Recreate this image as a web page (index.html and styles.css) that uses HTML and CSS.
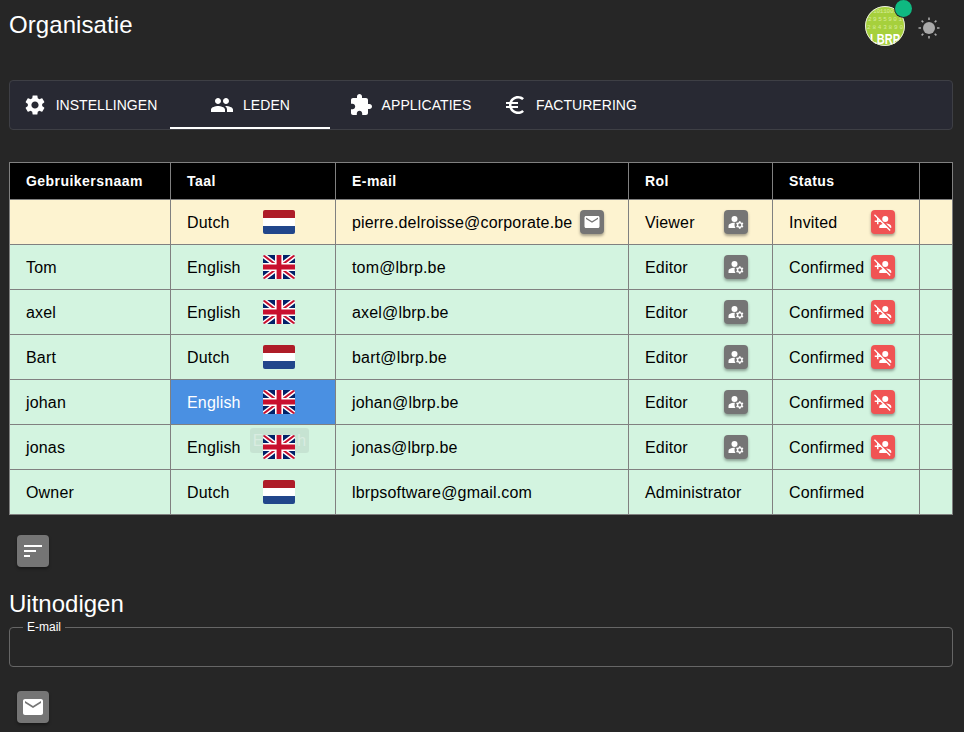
FILE: index.html
```html
<!DOCTYPE html>
<html lang="nl">
<head>
<meta charset="utf-8">
<title>Organisatie</title>
<link rel="stylesheet" href="styles.css">
</head>
<body>
<svg class="defs" width="0" height="0" aria-hidden="true">
  <defs><clipPath id="avatar-clip"><circle cx="20" cy="20" r="20"/></clipPath></defs>
  <symbol id="i-settings" viewBox="0 0 24 24"><path d="M19.14 12.94c.04-.3.06-.61.06-.94 0-.32-.02-.64-.07-.94l2.03-1.58c.18-.14.23-.41.12-.61l-1.92-3.32c-.12-.22-.37-.29-.59-.22l-2.39.96c-.5-.38-1.03-.7-1.62-.94l-.36-2.54c-.04-.24-.24-.41-.48-.41h-3.84c-.24 0-.43.17-.47.41l-.36 2.54c-.59.24-1.13.57-1.62.94l-2.39-.96c-.22-.08-.47 0-.59.22L2.74 8.87c-.12.21-.08.47.12.61l2.03 1.58c-.05.3-.09.63-.09.94s.02.64.07.94l-2.03 1.58c-.18.14-.23.41-.12.61l1.92 3.32c.12.22.37.29.59.22l2.39-.96c.5.38 1.03.7 1.62.94l.36 2.54c.05.24.24.41.48.41h3.84c.24 0 .44-.17.47-.41l.36-2.54c.59-.24 1.13-.56 1.62-.94l2.39.96c.22.08.47 0 .59-.22l1.92-3.32c.12-.22.07-.47-.12-.61l-2.01-1.58zM12 15.6c-1.98 0-3.6-1.62-3.6-3.6s1.62-3.6 3.6-3.6 3.6 1.62 3.6 3.6-1.62 3.6-3.6 3.6z"/></symbol>
  <symbol id="i-people" viewBox="0 0 24 24"><path d="M16 11c1.66 0 2.99-1.34 2.99-3S17.66 5 16 5c-1.66 0-3 1.34-3 3s1.34 3 3 3zm-8 0c1.66 0 2.99-1.34 2.99-3S9.66 5 8 5C6.34 5 5 6.34 5 8s1.34 3 3 3zm0 2c-2.33 0-7 1.17-7 3.5V19h14v-2.5c0-2.33-4.67-3.5-7-3.5zm8 0c-.29 0-.62.02-.97.05 1.16.84 1.97 1.97 1.97 3.45V19h6v-2.5c0-2.33-4.67-3.5-7-3.5z"/></symbol>
  <symbol id="i-extension" viewBox="0 0 24 24"><path d="M20.5 11H19V7c0-1.1-.9-2-2-2h-4V3.5C13 2.12 11.88 1 10.5 1S8 2.12 8 3.5V5H4c-1.1 0-1.99.9-1.99 2v3.8H3.5c1.49 0 2.7 1.21 2.7 2.7s-1.21 2.7-2.7 2.7H2V20c0 1.1.9 2 2 2h3.8v-1.5c0-1.49 1.21-2.7 2.7-2.7 1.49 0 2.7 1.21 2.7 2.7V22H17c1.1 0 2-.9 2-2v-4h1.5c1.38 0 2.5-1.12 2.5-2.5S21.88 11 20.5 11z"/></symbol>
  <symbol id="i-euro" viewBox="0 0 24 24"><path d="M15 18.5c-2.51 0-4.68-1.42-5.76-3.5H15v-2H8.58c-.05-.33-.08-.66-.08-1s.03-.67.08-1H15V9H9.24C10.32 6.92 12.5 5.5 15 5.5c1.61 0 3.09.59 4.23 1.57L21 5.3C19.41 3.87 17.3 3 15 3c-3.92 0-7.24 2.51-8.48 6H3v2h3.06c-.04.33-.06.66-.06 1s.02.67.06 1H3v2h3.52c1.24 3.49 4.56 6 8.48 6 2.31 0 4.41-.87 6-2.3l-1.78-1.77c-1.13.98-2.6 1.57-4.22 1.57z"/></symbol>
  <symbol id="i-email" viewBox="0 0 24 24"><path d="M20 4H4c-1.1 0-1.99.9-1.99 2L2 18c0 1.1.9 2 2 2h16c1.1 0 2-.9 2-2V6c0-1.1-.9-2-2-2zm0 4l-8 5-8-5V6l8 5 8-5v2z"/></symbol>
  <symbol id="i-sort" viewBox="0 0 24 24"><path d="M3 18h6v-2H3v2zM3 6v2h18V6H3zm0 7h12v-2H3v2z"/></symbol>
  <symbol id="i-manage" viewBox="0 0 24 24"><circle cx="10" cy="8" r="4"/><path d="M10.67 13.02c-.22-.01-.44-.02-.67-.02-2.42 0-4.68.67-6.61 1.82-.88.52-1.39 1.5-1.39 2.53V20h9.26c-.79-1.13-1.26-2.51-1.26-4 0-1.07.25-2.07.67-2.98z"/><path d="M20.75 16c0-.22-.03-.42-.06-.63l1.14-1.01-1-1.73-1.45.49c-.32-.27-.68-.48-1.08-.63L18 11h-2l-.3 1.49c-.4.15-.76.36-1.08.63l-1.45-.49-1 1.73 1.14 1.01c-.03.21-.06.41-.06.63s.03.42.06.63l-1.14 1.01 1 1.73 1.45-.49c.32.27.68.48 1.08.63L16 21h2l.3-1.49c.4-.15.76-.36 1.08-.63l1.45.49 1-1.73-1.14-1.01c.03-.21.06-.41.06-.63zM17 18c-1.1 0-2-.9-2-2s.9-2 2-2 2 .9 2 2-.9 2-2 2z"/></symbol>
  <symbol id="i-personoff" viewBox="0 0 24 24"><circle cx="15" cy="8" r="4"/><path d="M23 20v-2c0-2.3-4.1-3.7-6.9-3.9l6 5.9h.9zm-11.6-5.5C9.2 15.1 7 16.3 7 18v2h9.9l4 4 1.3-1.3-21-20.9L0 3.1l4 4V10H1v2h3v3h2v-3h2.9l2.5 2.5zM6 10v-.9l.9.9H6z"/></symbol>
  <symbol id="f-nl" viewBox="0 0 32 24">
    <rect width="32" height="8" fill="#ae1c28"/><rect y="8" width="32" height="8" fill="#fff"/><rect y="16" width="32" height="8" fill="#21468b"/>
  </symbol>
  <symbol id="f-uk" viewBox="0 0 32 24">
    <rect width="32" height="24" fill="#012169"/>
    <path d="M0 0L32 24M32 0L0 24" stroke="#fff" stroke-width="5"/>
    <path d="M0 0L32 24M32 0L0 24" stroke="#c8102e" stroke-width="2"/>
    <path d="M16 0V24M0 12H32" stroke="#fff" stroke-width="8"/>
    <path d="M16 0V24M0 12H32" stroke="#c8102e" stroke-width="4.8"/>
  </symbol>
</svg>

<header class="topbar">
  <h1 class="title">Organisatie</h1>
  <div class="top-actions">
    <div class="avatar-wrap">
      <svg class="avatar" viewBox="0 0 40 40">
        <g clip-path="url(#avatar-clip)">
          <circle cx="20" cy="20" r="20" fill="#a6d03c"/>
          <text class="avatar-digits" x="20" y="7" textLength="24">1011001</text>
          <text class="avatar-digits" x="20" y="15" textLength="34">2955901</text>
          <text class="avatar-digits" x="20" y="23" textLength="36">2843890</text>
          <text class="avatar-brand" x="20" y="38" textLength="30" lengthAdjust="spacingAndGlyphs">LBRP</text>
        </g>
        <circle class="avatar-ring" cx="20" cy="20" r="19.5"/>
      </svg>
      <span class="badge"></span>
    </div>
    <svg class="sun" viewBox="0 0 24 24">
      <circle cx="12" cy="12" r="6"/>
      <path class="sun-rays" d="M12 1.5V4M12 20V22.5M1.5 12H4M20 12H22.5M4.6 4.6L6.3 6.3M17.7 17.7L19.4 19.4M4.6 19.4L6.3 17.7M17.7 6.3L19.4 4.6"/>
    </svg>
  </div>
</header>

<nav class="tabs">
  <a class="tab"><svg class="tab-icon"><use href="#i-settings"/></svg><span>INSTELLINGEN</span></a>
  <a class="tab tab-active"><svg class="tab-icon"><use href="#i-people"/></svg><span>LEDEN</span></a>
  <a class="tab"><svg class="tab-icon"><use href="#i-extension"/></svg><span>APPLICATIES</span></a>
  <a class="tab"><svg class="tab-icon"><use href="#i-euro"/></svg><span>FACTURERING</span></a>
</nav>

<table class="grid">
  <colgroup>
    <col class="c-user"><col class="c-lang"><col class="c-mail"><col class="c-role"><col class="c-status"><col class="c-end">
  </colgroup>
  <thead>
    <tr><th>Gebruikersnaam</th><th>Taal</th><th>E-mail</th><th>Rol</th><th>Status</th><th></th></tr>
  </thead>
  <tbody>
    <tr class="row-invited">
      <td></td>
      <td><div class="lang"><span class="lang-name">Dutch</span><svg class="flag"><use href="#f-nl"/></svg></div></td>
      <td><div class="mail">pierre.delroisse@corporate.be<button class="act act-grey"><svg><use href="#i-email"/></svg></button></div></td>
      <td><div class="split">Viewer<button class="act act-grey"><svg><use href="#i-manage"/></svg></button></div></td>
      <td><div class="split">Invited<button class="act act-red"><svg><use href="#i-personoff"/></svg></button></div></td>
      <td></td>
    </tr>
    <tr>
      <td>Tom</td>
      <td><div class="lang"><span class="lang-name">English</span><svg class="flag"><use href="#f-uk"/></svg></div></td>
      <td>tom@lbrp.be</td>
      <td><div class="split">Editor<button class="act act-grey"><svg><use href="#i-manage"/></svg></button></div></td>
      <td><div class="split">Confirmed<button class="act act-red"><svg><use href="#i-personoff"/></svg></button></div></td>
      <td></td>
    </tr>
    <tr>
      <td>axel</td>
      <td><div class="lang"><span class="lang-name">English</span><svg class="flag"><use href="#f-uk"/></svg></div></td>
      <td>axel@lbrp.be</td>
      <td><div class="split">Editor<button class="act act-grey"><svg><use href="#i-manage"/></svg></button></div></td>
      <td><div class="split">Confirmed<button class="act act-red"><svg><use href="#i-personoff"/></svg></button></div></td>
      <td></td>
    </tr>
    <tr>
      <td>Bart</td>
      <td><div class="lang"><span class="lang-name">Dutch</span><svg class="flag"><use href="#f-nl"/></svg></div></td>
      <td>bart@lbrp.be</td>
      <td><div class="split">Editor<button class="act act-grey"><svg><use href="#i-manage"/></svg></button></div></td>
      <td><div class="split">Confirmed<button class="act act-red"><svg><use href="#i-personoff"/></svg></button></div></td>
      <td></td>
    </tr>
    <tr>
      <td>johan</td>
      <td class="cell-selected"><div class="lang"><span class="lang-name">English</span><svg class="flag"><use href="#f-uk"/></svg></div></td>
      <td>johan@lbrp.be</td>
      <td><div class="split">Editor<button class="act act-grey"><svg><use href="#i-manage"/></svg></button></div></td>
      <td><div class="split">Confirmed<button class="act act-red"><svg><use href="#i-personoff"/></svg></button></div></td>
      <td></td>
    </tr>
    <tr>
      <td>jonas</td>
      <td class="cell-ghost"><div class="lang"><span class="lang-name">English</span><svg class="flag"><use href="#f-uk"/></svg></div><span class="ghost">English</span></td>
      <td>jonas@lbrp.be</td>
      <td><div class="split">Editor<button class="act act-grey"><svg><use href="#i-manage"/></svg></button></div></td>
      <td><div class="split">Confirmed<button class="act act-red"><svg><use href="#i-personoff"/></svg></button></div></td>
      <td></td>
    </tr>
    <tr>
      <td>Owner</td>
      <td><div class="lang"><span class="lang-name">Dutch</span><svg class="flag"><use href="#f-nl"/></svg></div></td>
      <td>lbrpsoftware@gmail.com</td>
      <td>Administrator</td>
      <td>Confirmed</td>
      <td></td>
    </tr>
  </tbody>
</table>

<button class="square sort-btn"><svg><use href="#i-sort"/></svg></button>

<h2 class="invite-title">Uitnodigen</h2>
<fieldset class="field">
  <legend>E-mail</legend>
</fieldset>
<button class="square send-btn"><svg><use href="#i-email"/></svg></button>
</body>
</html>
```

FILE: styles.css
```css
* { box-sizing: border-box; }

html, body { height: 100%; }

body {
  margin: 0;
  padding: 0 11px 0 9px;
  background: #262626;
  color: #fff;
  font-family: "Liberation Sans", Arial, sans-serif;
  font-size: 16px;
  overflow: hidden;
}

.defs { display: block; height: 0; }

.topbar {
  height: 80px;
  display: flex;
  justify-content: space-between;
  align-items: flex-start;
}

.title {
  margin: 11px 0 0;
  font-size: 24px;
  line-height: 28px;
  font-weight: 400;
  letter-spacing: .08px;
}

.top-actions {
  display: flex;
  align-items: center;
  margin-top: 6px;
  margin-right: 12px;
  gap: 12px;
}

.avatar-wrap { position: relative; width: 40px; height: 40px; }
.avatar { display: block; width: 40px; height: 40px; }
.avatar-ring { fill: none; stroke: #e8e8e0; stroke-width: 1; }
.avatar-digits {
  fill: #d6eb9a;
  font-family: "Liberation Mono", monospace;
  font-size: 6px;
  text-anchor: middle;
}
.avatar-brand {
  fill: #fff;
  font-family: "Liberation Sans", sans-serif;
  font-weight: 700;
  font-size: 15px;
  text-anchor: middle;
}
.badge {
  position: absolute;
  top: -6px;
  right: -7px;
  width: 17px;
  height: 17px;
  border-radius: 50%;
  background: #0fb981;
  box-shadow: 0 0 0 1px #262626;
}

.sun { width: 24px; height: 24px; fill: #a9a9a9; margin-top: 4px; }
.sun-rays { stroke: #a9a9a9; stroke-width: 1.6; fill: none; }

.tabs {
  height: 50px;
  display: flex;
  background: #282933;
  border: 1px solid #3e3f45;
  border-radius: 4px;
  margin-bottom: 32px;
}

.tab {
  width: 160px;
  height: 48px;
  display: flex;
  align-items: center;
  justify-content: center;
  gap: 9px;
  font-size: 14px;
  letter-spacing: .05px;
  color: #fff;
}

.tab-active { border-bottom: 2px solid #fff; }
.tab-active > * { position: relative; top: 1px; }

.tab-icon { width: 24px; height: 24px; fill: #fff; flex: none; }

.grid {
  width: 944px;
  table-layout: fixed;
  border-collapse: collapse;
  color: #000;
}

.c-user { width: 161px; }
.c-lang { width: 165px; }
.c-mail { width: 293px; }
.c-role { width: 144px; }
.c-status { width: 147px; }

.grid th, .grid td {
  border: 1px solid #808080;
  text-align: left;
}

.grid th {
  height: 37px;
  padding: 0 16px;
  background: #000;
  color: #fff;
  font-size: 14px;
  font-weight: 700;
  letter-spacing: .45px;
}

.grid td {
  height: 45px;
  padding: 2px 16px 0;
  background: #d3f4e0;
  white-space: nowrap;
  letter-spacing: .17px;
}

.grid .row-invited td { background: #fdf3d0; }

.grid td.cell-selected { background: #4a90e2; color: #fff; }
.cell-ghost { position: relative; }

.ghost {
  position: absolute;
  left: 79px;
  top: 3px;
  width: 59px;
  height: 25px;
  border-radius: 3px;
  background: rgba(120, 130, 125, .14);
  color: rgba(255, 255, 255, .35);
  text-align: center;
  line-height: 25px;
}

.cell-ghost .flag { position: relative; z-index: 1; }

.lang { display: flex; align-items: center; }
.lang-name { width: 76px; }
.flag { width: 32px; height: 24px; border-radius: 2px; flex: none; margin-bottom: 2px; }

.mail { display: flex; align-items: center; gap: 8px; }

.split {
  display: flex;
  align-items: center;
  justify-content: space-between;
  padding-right: 8px;
}

.act {
  width: 24px;
  height: 24px;
  padding: 3px;
  margin-bottom: 2px;
  border: 0;
  border-radius: 4px;
  display: flex;
  flex: none;
  box-shadow: 0 2px 3px rgba(0, 0, 0, .35);
}
.act svg { width: 18px; height: 18px; fill: #fff; }
.act-grey { background: #757575; }
.act-red { background: #f05353; }

.square {
  display: block;
  width: 32px;
  height: 32px;
  padding: 4px;
  border: 0;
  border-radius: 4px;
  background: #757575;
  box-shadow: 0 2px 3px rgba(0, 0, 0, .35);
}
.square svg { display: block; width: 24px; height: 24px; fill: #fff; }

.sort-btn { margin: 20px 0 0 8px; }

.invite-title {
  margin: 23px 0 0;
  font-size: 24px;
  line-height: 28px;
  font-weight: 400;
}

.field {
  display: block;
  height: 47px;
  margin: 2px 0 0;
  padding: 0 0 0 13px;
  border: 1px solid #666;
  border-radius: 4px;
  min-width: 0;
}

.field legend {
  padding: 0 4px;
  font-size: 12px;
  line-height: 14px;
  color: #fff;
}

.send-btn { margin: 24px 0 0 8px; }
```
